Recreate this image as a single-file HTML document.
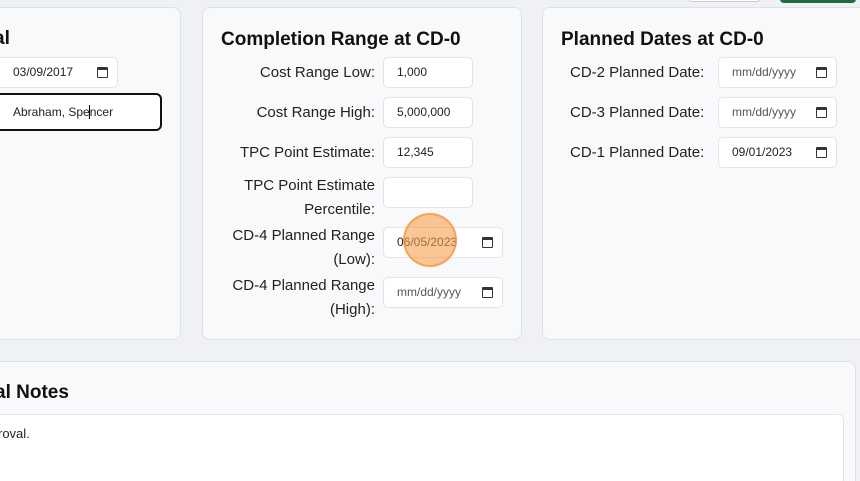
<!DOCTYPE html>
<html style="width:860px;height:481px;overflow:hidden"><head><style>
*{box-sizing:border-box;margin:0;padding:0}
body{width:860px;height:481px;overflow:hidden;background:#eff1f5;font-family:"Segoe UI","Liberation Sans",sans-serif;color:#212529;position:relative}
.card{position:absolute;background:#f8f9fb;border:1px solid #dde1e6;border-radius:8px}
.t{position:absolute;font-size:19px;font-weight:600;color:#111;white-space:nowrap;line-height:24px}
.lb{position:absolute;font-size:15px;text-align:right;line-height:24px;color:#222;white-space:nowrap}
.in{position:absolute;background:#fff;border:1px solid #e1e4e8;border-radius:5px;height:31px;font-size:12px;line-height:29px;padding-left:13px;color:#222}
.cal{position:absolute;right:9px;top:9px;width:11px;height:11px;border:1.5px solid #333;border-top-width:3px;border-radius:1px}
.ph{color:#555}
</style></head><body>
<div style="position:absolute;left:688px;top:-6px;width:73px;height:8px;background:#fff;border:1px solid #ccc;border-radius:4px"></div>
<div style="position:absolute;left:780px;top:-6px;width:76px;height:9px;background:#1f6b3b;border-radius:4px"></div>

<div class="card" style="left:-10px;top:7px;width:191px;height:333px"></div>
<div class="t" style="left:-6px;top:27px">al</div>
<div class="in" style="left:-10px;top:57px;width:128px;padding-left:22px">03/09/2017<div class="cal"></div></div>
<div class="in" style="left:-10px;top:93px;width:172px;height:38px;border:2px solid #111;border-radius:6px;line-height:34px;padding-left:21px">Abraham, Spe<span style="border-left:1px solid #000;margin-left:-1px"></span>ncer</div>

<div class="card" style="left:202px;top:7px;width:320px;height:333px"></div>
<div class="t" style="left:221px;top:28px">Completion Range at CD-0</div>
<div class="lb" style="right:485px;top:61px">Cost Range Low:</div>
<div class="in" style="left:383px;top:57px;width:90px">1,000</div>
<div class="lb" style="right:485px;top:101px">Cost Range High:</div>
<div class="in" style="left:383px;top:97px;width:90px">5,000,000</div>
<div class="lb" style="right:485px;top:141px">TPC Point Estimate:</div>
<div class="in" style="left:383px;top:137px;width:90px">12,345</div>
<div class="lb" style="right:485px;top:174px">TPC Point Estimate<br>Percentile:</div>
<div class="in" style="left:383px;top:177px;width:90px"></div>
<div class="lb" style="right:485px;top:224px">CD-4 Planned Range<br>(Low):</div>
<div class="in" style="left:383px;top:227px;width:120px">06/05/2023<div class="cal"></div></div>
<div class="lb" style="right:485px;top:274px">CD-4 Planned Range<br>(High):</div>
<div class="in ph" style="left:383px;top:277px;width:120px">mm/dd/yyyy<div class="cal"></div></div>
<div style="position:absolute;left:403px;top:213px;width:54px;height:54px;border-radius:50%;background:rgba(248,160,80,0.6);border:2px solid rgba(245,150,60,0.7)"></div>

<div class="card" style="left:542px;top:7px;width:330px;height:333px"></div>
<div class="t" style="left:561px;top:28px">Planned Dates at CD-0</div>
<div class="lb" style="left:570px;top:61px">CD-2 Planned Date:</div>
<div class="in ph" style="left:718px;top:57px;width:119px">mm/dd/yyyy<div class="cal"></div></div>
<div class="lb" style="left:570px;top:101px">CD-3 Planned Date:</div>
<div class="in ph" style="left:718px;top:97px;width:119px">mm/dd/yyyy<div class="cal"></div></div>
<div class="lb" style="left:570px;top:141px">CD-1 Planned Date:</div>
<div class="in" style="left:718px;top:137px;width:119px">09/01/2023<div class="cal"></div></div>

<div class="card" style="left:-10px;top:361px;width:866px;height:130px"></div>
<div class="t" style="left:-5px;top:381px">al Notes</div>
<div style="position:absolute;left:-10px;top:414px;width:854px;height:72px;background:#fff;border:1px solid #e1e4e8;border-radius:6px"></div>
<div style="position:absolute;left:-2px;top:426px;font-size:13px;line-height:16px">roval.</div>
</body></html>
